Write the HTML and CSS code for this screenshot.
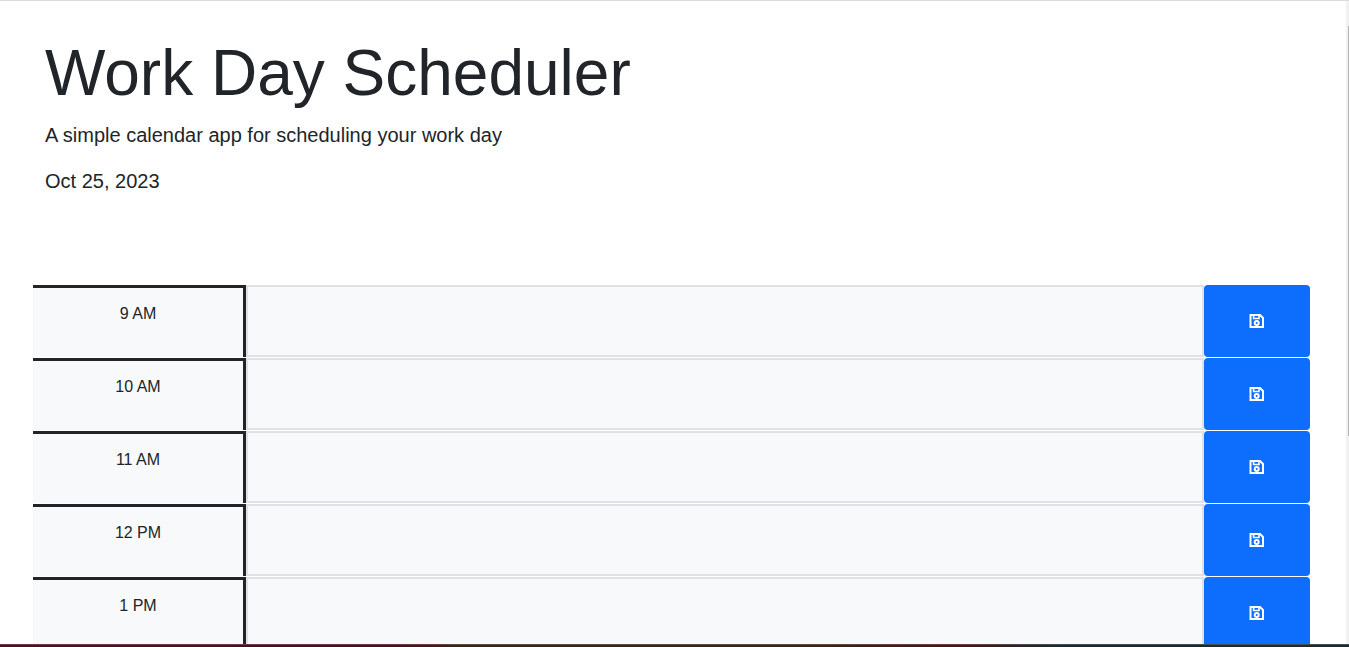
FILE: index.html
```
<!DOCTYPE html>
<html lang="en">
<head>
<meta charset="utf-8">
<title>Work Day Scheduler</title>
<link rel="stylesheet" href="styles.css">
</head>
<body>
<svg class="defs" width="0" height="0" aria-hidden="true">
  <symbol id="save" viewBox="0 0 16 14">
    <path fill="none" stroke="currentColor" stroke-width="2" d="M1.5 1H11L14 4V13H1.5Z"/>
    <path fill="none" stroke="currentColor" stroke-width="1.6" d="M4.6 1V4.5H10V1"/>
    <circle cx="7.7" cy="9" r="2" fill="none" stroke="currentColor" stroke-width="2"/>
  </symbol>
</svg>
<div class="page">
  <div class="content">
    <header class="header">
      <h1 class="title">Work Day Scheduler</h1>
      <p class="lead">A simple calendar app for scheduling your work day</p>
      <p class="lead">Oct 25, 2023</p>
    </header>
    <main class="schedule">
      <div class="row"><div class="hour">9 AM</div><textarea class="description" aria-label="9 AM"></textarea><button class="save" aria-label="save"><svg class="icon"><use href="#save"/></svg></button></div>
      <div class="row"><div class="hour">10 AM</div><textarea class="description" aria-label="10 AM"></textarea><button class="save" aria-label="save"><svg class="icon"><use href="#save"/></svg></button></div>
      <div class="row"><div class="hour">11 AM</div><textarea class="description" aria-label="11 AM"></textarea><button class="save" aria-label="save"><svg class="icon"><use href="#save"/></svg></button></div>
      <div class="row"><div class="hour">12 PM</div><textarea class="description" aria-label="12 PM"></textarea><button class="save" aria-label="save"><svg class="icon"><use href="#save"/></svg></button></div>
      <div class="row"><div class="hour">1 PM</div><textarea class="description" aria-label="1 PM"></textarea><button class="save" aria-label="save"><svg class="icon"><use href="#save"/></svg></button></div>
    </main>
  </div>
  <div class="scrollbar"><div class="thumb"></div></div>
</div>
<div class="edge"></div>
</body>
</html>
```
FILE: styles.css
```
* { box-sizing: border-box; }
body {
  margin: 0;
  height: 647px;
  overflow: hidden;
  display: flex;
  flex-direction: column;
  color: #212529;
  background: #fff;
  font-family: "Liberation Sans", Arial, sans-serif;
  font-size: 16px;
  line-height: 24px;
}
.defs { position: absolute; }
.page {
  flex: 1;
  min-height: 0;
  display: flex;
  border-top: 1px solid #dadada;
}
.content {
  flex: 1;
  min-width: 0;
  overflow: hidden;
  padding: 34px 36px 0 33px;
}
.header { height: 250px; padding: 0 12px; }
.title {
  margin: 0 0 8px;
  font-size: 64px;
  font-weight: 400;
  line-height: 77px;
}
.lead { margin: 0 0 16px; font-size: 20px; line-height: 30px; }
.schedule { display: flex; flex-direction: column; gap: 1px; }
.row { display: grid; grid-template-columns: 213px 1fr 106px; height: 72px; }
.hour {
  padding-top: 14px;
  text-align: center;
  background: #f8f9fa;
  border-top: 3px solid #212529;
  border-right: 3px solid #212529;
}
.description {
  display: block;
  width: 100%;
  height: 72px;
  resize: none;
  background: #f8f9fa;
  border: 2px solid #dee2e6;
  border-radius: 0;
  outline: 0;
}
.save {
  display: flex;
  align-items: center;
  justify-content: center;
  padding: 0;
  color: #fff;
  background: #0d6efd;
  border: 0;
  border-radius: 4px;
}
.icon { width: 16px; height: 14px; }
.scrollbar { width: 3px; padding: 25px 0 0 2px; background: #f1f1f1; }
.thumb { height: 410px; background: #b5b5b5; }
.edge {
  height: 3px;
  border-top: 1px solid rgba(255, 255, 255, .18);
  background: linear-gradient(90deg, #4c1024 0, #4a1020 400px, #3c2415 460px, #3c2415 800px, #461616 970px, #182c30 1060px, #182c30 100%) border-box;
}
```
